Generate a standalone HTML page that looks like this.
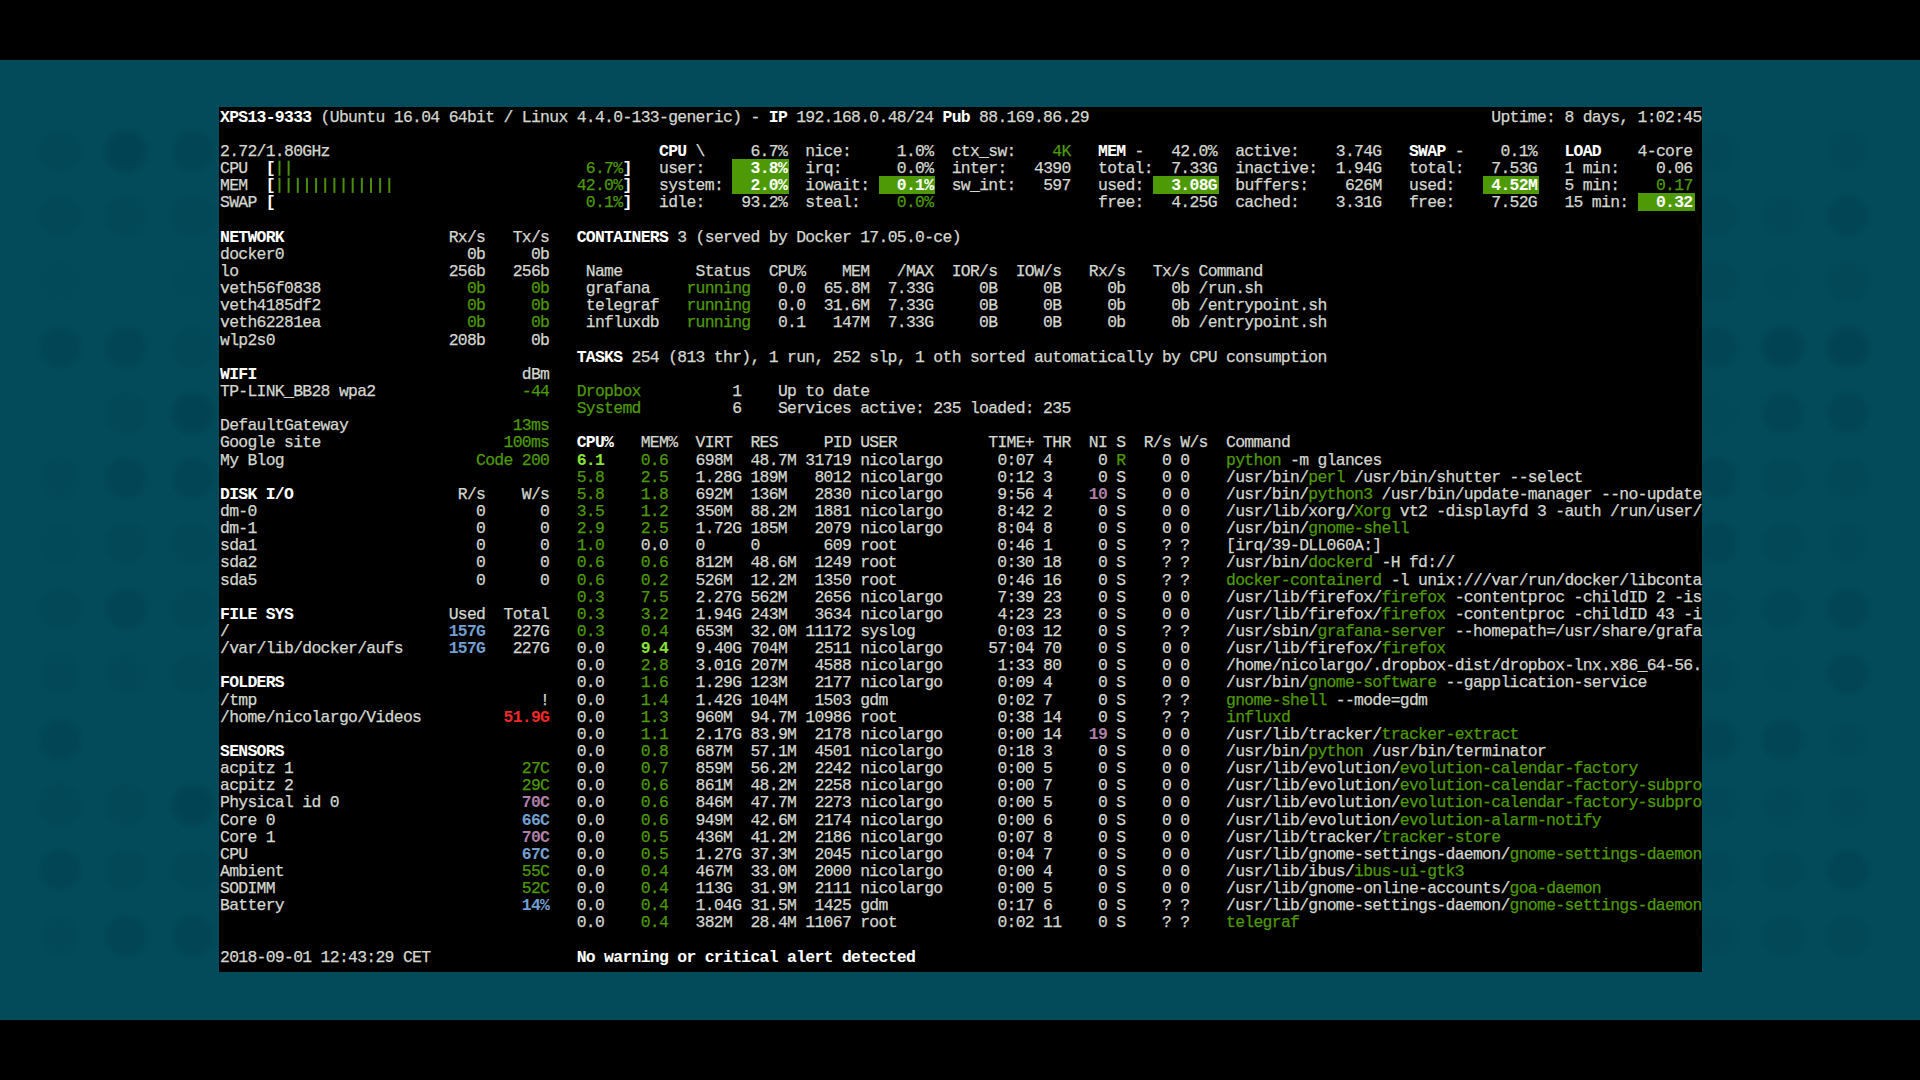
<!DOCTYPE html>
<html><head><meta charset="utf-8"><title>glances</title>
<style>
html,body{margin:0;padding:0;}
body{width:1920px;height:1080px;overflow:hidden;background:#000;position:relative;}
#bg{position:absolute;left:0;top:60px;width:1920px;height:960px;background:#034a5a;overflow:hidden;}
.ic{position:absolute;width:40px;height:40px;border-radius:50%;background:rgba(0,20,30,0.11);filter:blur(2.5px);}
#term{position:absolute;left:219px;top:107px;width:1483px;height:865px;background:#000;}
.row{position:absolute;left:220.00px;height:17.1429px;line-height:17.1429px;white-space:pre;
 font-family:"Liberation Mono",monospace;font-size:16.40px;letter-spacing:-0.6906px;color:#d3d7cf;-webkit-text-stroke:0.25px currentColor;}
.hl{position:absolute;background:#4e9a06;}
.bar{position:absolute;width:2.2px;height:15px;background:#4e9a06;}
.n{color:#d3d7cf}
.b{color:#ffffff;font-weight:bold;-webkit-text-stroke-width:0.05px}
.g{color:#4e9a06}
.G{color:#8ae234;font-weight:bold;-webkit-text-stroke-width:0.05px}
.B{color:#729fcf;font-weight:bold;-webkit-text-stroke-width:0.05px}
.M{color:#ad7fa8;font-weight:bold;-webkit-text-stroke-width:0.05px}
.R{color:#ef2929;font-weight:bold;-webkit-text-stroke-width:0.05px}
.h{color:#ffffff;font-weight:bold;-webkit-text-stroke-width:0.05px}
</style></head><body>
<div id="bg"><div class="ic" style="left:40px;top:71px;opacity:0.33"></div>
<div class="ic" style="left:106px;top:71px;opacity:1.00"></div>
<div class="ic" style="left:173px;top:71px;opacity:0.63"></div>
<div class="ic" style="left:1697px;top:71px;opacity:0.19"></div>
<div class="ic" style="left:1828px;top:71px;opacity:0.19"></div>
<div class="ic" style="left:40px;top:136px;opacity:0.33"></div>
<div class="ic" style="left:106px;top:136px;opacity:0.33"></div>
<div class="ic" style="left:173px;top:136px;opacity:0.33"></div>
<div class="ic" style="left:1697px;top:136px;opacity:0.33"></div>
<div class="ic" style="left:1763px;top:136px;opacity:0.19"></div>
<div class="ic" style="left:1828px;top:136px;opacity:0.63"></div>
<div class="ic" style="left:40px;top:202px;opacity:0.11"></div>
<div class="ic" style="left:173px;top:202px;opacity:0.11"></div>
<div class="ic" style="left:1697px;top:202px;opacity:0.33"></div>
<div class="ic" style="left:1763px;top:202px;opacity:0.05"></div>
<div class="ic" style="left:1828px;top:202px;opacity:0.33"></div>
<div class="ic" style="left:40px;top:267px;opacity:0.63"></div>
<div class="ic" style="left:106px;top:267px;opacity:0.63"></div>
<div class="ic" style="left:173px;top:267px;opacity:0.33"></div>
<div class="ic" style="left:1697px;top:267px;opacity:0.63"></div>
<div class="ic" style="left:1763px;top:267px;opacity:1.00"></div>
<div class="ic" style="left:1828px;top:267px;opacity:1.00"></div>
<div class="ic" style="left:106px;top:333px;opacity:0.33"></div>
<div class="ic" style="left:173px;top:333px;opacity:1.00"></div>
<div class="ic" style="left:1697px;top:333px;opacity:0.11"></div>
<div class="ic" style="left:1763px;top:333px;opacity:0.63"></div>
<div class="ic" style="left:1828px;top:333px;opacity:0.63"></div>
<div class="ic" style="left:40px;top:398px;opacity:0.19"></div>
<div class="ic" style="left:106px;top:398px;opacity:0.63"></div>
<div class="ic" style="left:173px;top:398px;opacity:0.63"></div>
<div class="ic" style="left:1697px;top:398px;opacity:0.63"></div>
<div class="ic" style="left:1763px;top:398px;opacity:0.33"></div>
<div class="ic" style="left:1828px;top:398px;opacity:0.33"></div>
<div class="ic" style="left:40px;top:463px;opacity:0.11"></div>
<div class="ic" style="left:106px;top:463px;opacity:0.33"></div>
<div class="ic" style="left:173px;top:463px;opacity:0.33"></div>
<div class="ic" style="left:1697px;top:463px;opacity:0.63"></div>
<div class="ic" style="left:1763px;top:463px;opacity:0.33"></div>
<div class="ic" style="left:1828px;top:463px;opacity:0.19"></div>
<div class="ic" style="left:40px;top:529px;opacity:0.33"></div>
<div class="ic" style="left:106px;top:529px;opacity:0.63"></div>
<div class="ic" style="left:173px;top:529px;opacity:0.33"></div>
<div class="ic" style="left:1697px;top:529px;opacity:0.23"></div>
<div class="ic" style="left:1763px;top:529px;opacity:0.44"></div>
<div class="ic" style="left:1828px;top:529px;opacity:0.63"></div>
<div class="ic" style="left:40px;top:594px;opacity:0.19"></div>
<div class="ic" style="left:106px;top:594px;opacity:0.19"></div>
<div class="ic" style="left:173px;top:594px;opacity:0.33"></div>
<div class="ic" style="left:1697px;top:594px;opacity:0.19"></div>
<div class="ic" style="left:1763px;top:594px;opacity:0.05"></div>
<div class="ic" style="left:1828px;top:594px;opacity:0.63"></div>
<div class="ic" style="left:40px;top:660px;opacity:0.63"></div>
<div class="ic" style="left:1697px;top:660px;opacity:0.63"></div>
<div class="ic" style="left:1763px;top:660px;opacity:0.63"></div>
<div class="ic" style="left:1828px;top:660px;opacity:0.19"></div>
<div class="ic" style="left:40px;top:725px;opacity:0.33"></div>
<div class="ic" style="left:106px;top:725px;opacity:0.33"></div>
<div class="ic" style="left:173px;top:725px;opacity:1.00"></div>
<div class="ic" style="left:1697px;top:725px;opacity:0.19"></div>
<div class="ic" style="left:1763px;top:725px;opacity:0.19"></div>
<div class="ic" style="left:1828px;top:725px;opacity:0.19"></div>
<div class="ic" style="left:40px;top:790px;opacity:0.63"></div>
<div class="ic" style="left:106px;top:790px;opacity:0.33"></div>
<div class="ic" style="left:173px;top:790px;opacity:0.33"></div>
<div class="ic" style="left:1697px;top:790px;opacity:0.19"></div>
<div class="ic" style="left:1763px;top:790px;opacity:0.33"></div>
<div class="ic" style="left:1828px;top:790px;opacity:0.63"></div>
<div class="ic" style="left:40px;top:856px;opacity:0.19"></div>
<div class="ic" style="left:106px;top:856px;opacity:0.63"></div>
<div class="ic" style="left:173px;top:856px;opacity:0.63"></div>
<div class="ic" style="left:1697px;top:856px;opacity:0.19"></div>
<div class="ic" style="left:1763px;top:856px;opacity:0.33"></div>
<div class="ic" style="left:1828px;top:856px;opacity:0.33"></div></div>
<div id="term"></div>
<div class="hl" style="left:732.46px;top:159.13px;width:56.41px;height:17.44px"></div>
<div class="hl" style="left:732.46px;top:176.27px;width:56.41px;height:17.44px"></div>
<div class="hl" style="left:878.87px;top:176.27px;width:56.41px;height:17.44px"></div>
<div class="hl" style="left:1153.40px;top:176.27px;width:65.56px;height:17.44px"></div>
<div class="hl" style="left:1482.84px;top:176.27px;width:56.41px;height:17.44px"></div>
<div class="hl" style="left:1638.40px;top:193.41px;width:56.41px;height:17.44px"></div>
<svg style="position:absolute;left:0;top:0" width="1920" height="1080"><rect x="278.48" y="160.73" width="2" height="15" fill="#4a8f0a"/><rect x="287.63" y="160.73" width="2" height="15" fill="#4a8f0a"/><rect x="278.48" y="177.87" width="2" height="15" fill="#4a8f0a"/><rect x="287.63" y="177.87" width="2" height="15" fill="#4a8f0a"/><rect x="296.78" y="177.87" width="2" height="15" fill="#4a8f0a"/><rect x="305.93" y="177.87" width="2" height="15" fill="#4a8f0a"/><rect x="315.09" y="177.87" width="2" height="15" fill="#4a8f0a"/><rect x="324.24" y="177.87" width="2" height="15" fill="#4a8f0a"/><rect x="333.39" y="177.87" width="2" height="15" fill="#4a8f0a"/><rect x="342.54" y="177.87" width="2" height="15" fill="#4a8f0a"/><rect x="351.69" y="177.87" width="2" height="15" fill="#4a8f0a"/><rect x="360.84" y="177.87" width="2" height="15" fill="#4a8f0a"/><rect x="369.99" y="177.87" width="2" height="15" fill="#4a8f0a"/><rect x="379.14" y="177.87" width="2" height="15" fill="#4a8f0a"/><rect x="388.29" y="177.87" width="2" height="15" fill="#4a8f0a"/></svg>
<div class="row" style="top:108.70px"><span class="b">XPS13-9333 </span><span class="n">(Ubuntu 16.04 64bit / Linux 4.4.0-133-generic) - </span><span class="b">IP </span><span class="n">192.168.0.48/24 </span><span class="b">Pub </span><span class="n">88.169.86.29                                            Uptime: 8 days, 1:02:45</span></div>
<div class="row" style="top:125.84px"><span class="n">                                                                                                                                                                  </span></div>
<div class="row" style="top:142.99px"><span class="n">2.72/1.80GHz                                    </span><span class="b">CPU </span><span class="n">\     6.7%  nice:     1.0%  ctx_sw:    </span><span class="g">4K   </span><span class="b">MEM </span><span class="n">-   42.0%  active:    3.74G   </span><span class="b">SWAP </span><span class="n">-    0.1%   </span><span class="b">LOAD    </span><span class="n">4-core </span></div>
<div class="row" style="top:160.13px"><span class="n">CPU  </span><span class="b">[                                  </span><span class="g">6.7%</span><span class="b">]   </span><span class="n">user:     </span><span class="h">3.8%  </span><span class="n">irq:      0.0%  inter:   4390   total:  7.33G  inactive:  1.94G   total:   7.53G   1 min:    0.06 </span></div>
<div class="row" style="top:177.27px"><span class="n">MEM  </span><span class="b">[                                 </span><span class="g">42.0%</span><span class="b">]   </span><span class="n">system:   </span><span class="h">2.0%  </span><span class="n">iowait:   </span><span class="h">0.1%  </span><span class="n">sw_int:   597   used:   </span><span class="h">3.08G  </span><span class="n">buffers:    626M   used:    </span><span class="h">4.52M   </span><span class="n">5 min:    </span><span class="g">0.17 </span></div>
<div class="row" style="top:194.41px"><span class="n">SWAP </span><span class="b">[                                  </span><span class="g">0.1%</span><span class="b">]   </span><span class="n">idle:    93.2%  steal:    </span><span class="g">0.0%                  </span><span class="n">free:   4.25G  cached:    3.31G   free:    7.52G   15 min:   </span><span class="h">0.32 </span></div>
<div class="row" style="top:211.56px"><span class="n">                                                                                                                                                                  </span></div>
<div class="row" style="top:228.70px"><span class="b">NETWORK                  </span><span class="n">Rx/s   Tx/s   </span><span class="b">CONTAINERS </span><span class="n">3 (served by Docker 17.05.0-ce)                                                                                 </span></div>
<div class="row" style="top:245.84px"><span class="n">docker0                    0b     0b                                                                                                                              </span></div>
<div class="row" style="top:262.99px"><span class="n">lo                       256b   256b    Name        Status  CPU%    MEM   /MAX  IOR/s  IOW/s   Rx/s   Tx/s Command                                                </span></div>
<div class="row" style="top:280.13px"><span class="n">veth56f0838                </span><span class="g">0b     0b    </span><span class="n">grafana    </span><span class="g">running   </span><span class="n">0.0  65.8M  7.33G     0B     0B     0b     0b /run.sh                                                </span></div>
<div class="row" style="top:297.27px"><span class="n">veth4185df2                </span><span class="g">0b     0b    </span><span class="n">telegraf   </span><span class="g">running   </span><span class="n">0.0  31.6M  7.33G     0B     0B     0b     0b /entrypoint.sh                                         </span></div>
<div class="row" style="top:314.41px"><span class="n">veth62281ea                </span><span class="g">0b     0b    </span><span class="n">influxdb   </span><span class="g">running   </span><span class="n">0.1   147M  7.33G     0B     0B     0b     0b /entrypoint.sh                                         </span></div>
<div class="row" style="top:331.56px"><span class="n">wlp2s0                   208b     0b                                                                                                                              </span></div>
<div class="row" style="top:348.70px"><span class="n">                                       </span><span class="b">TASKS </span><span class="n">254 (813 thr), 1 run, 252 slp, 1 oth sorted automatically by CPU consumption                                         </span></div>
<div class="row" style="top:365.84px"><span class="b">WIFI                             </span><span class="n">dBm                                                                                                                              </span></div>
<div class="row" style="top:382.99px"><span class="n">TP-LINK_BB28 wpa2                </span><span class="g">-44   Dropbox          </span><span class="n">1    Up to date                                                                                           </span></div>
<div class="row" style="top:400.13px"><span class="n">                                       </span><span class="g">Systemd          </span><span class="n">6    Services active: 235 loaded: 235                                                                     </span></div>
<div class="row" style="top:417.27px"><span class="n">DefaultGateway                  </span><span class="g">13ms                                                                                                                              </span></div>
<div class="row" style="top:434.41px"><span class="n">Google site                    </span><span class="g">100ms   </span><span class="b">CPU%   </span><span class="n">MEM%  VIRT  RES     PID USER          TIME+ THR  NI S  R/s W/s  Command                                             </span></div>
<div class="row" style="top:451.56px"><span class="n">My Blog                     </span><span class="g">Code 200   </span><span class="G">6.1    </span><span class="g">0.6   </span><span class="n">698M  48.7M 31719 nicolargo      0:07 4     0 </span><span class="g">R    </span><span class="n">0 0    </span><span class="g">python </span><span class="n">-m glances                                   </span></div>
<div class="row" style="top:468.70px"><span class="n">                                       </span><span class="g">5.8    2.5   </span><span class="n">1.28G 189M   8012 nicolargo      0:12 3     0 S    0 0    /usr/bin/</span><span class="g">perl </span><span class="n">/usr/bin/shutter --select             </span></div>
<div class="row" style="top:485.84px"><span class="b">DISK I/O                  </span><span class="n">R/s    W/s   </span><span class="g">5.8    1.8   </span><span class="n">692M  136M   2830 nicolargo      9:56 4    </span><span class="M">10 </span><span class="n">S    0 0    /usr/bin/</span><span class="g">python3 </span><span class="n">/usr/bin/update-manager --no-update</span></div>
<div class="row" style="top:502.99px"><span class="n">dm-0                        0      0   </span><span class="g">3.5    1.2   </span><span class="n">350M  88.2M  1881 nicolargo      8:42 2     0 S    0 0    /usr/lib/xorg/</span><span class="g">Xorg </span><span class="n">vt2 -displayfd 3 -auth /run/user/</span></div>
<div class="row" style="top:520.13px"><span class="n">dm-1                        0      0   </span><span class="g">2.9    2.5   </span><span class="n">1.72G 185M   2079 nicolargo      8:04 8     0 S    0 0    /usr/bin/</span><span class="g">gnome-shell                                </span></div>
<div class="row" style="top:537.27px"><span class="n">sda1                        0      0   </span><span class="g">1.0    </span><span class="n">0.0   0     0       609 root           0:46 1     0 S    ? ?    [irq/39-DLL060A:]                                   </span></div>
<div class="row" style="top:554.41px"><span class="n">sda2                        0      0   </span><span class="g">0.6    0.6   </span><span class="n">812M  48.6M  1249 root           0:30 18    0 S    ? ?    /usr/bin/</span><span class="g">dockerd </span><span class="n">-H fd://                           </span></div>
<div class="row" style="top:571.56px"><span class="n">sda5                        0      0   </span><span class="g">0.6    0.2   </span><span class="n">526M  12.2M  1350 root           0:46 16    0 S    ? ?    </span><span class="g">docker-containerd </span><span class="n">-l unix:///var/run/docker/libconta</span></div>
<div class="row" style="top:588.70px"><span class="n">                                       </span><span class="g">0.3    7.5   </span><span class="n">2.27G 562M   2656 nicolargo      7:39 23    0 S    0 0    /usr/lib/firefox/</span><span class="g">firefox </span><span class="n">-contentproc -childID 2 -is</span></div>
<div class="row" style="top:605.84px"><span class="b">FILE SYS                 </span><span class="n">Used  Total   </span><span class="g">0.3    3.2   </span><span class="n">1.94G 243M   3634 nicolargo      4:23 23    0 S    0 0    /usr/lib/firefox/</span><span class="g">firefox </span><span class="n">-contentproc -childID 43 -i</span></div>
<div class="row" style="top:622.99px"><span class="n">/                        </span><span class="B">157G   </span><span class="n">227G   </span><span class="g">0.3    0.4   </span><span class="n">653M  32.0M 11172 syslog         0:03 12    0 S    ? ?    /usr/sbin/</span><span class="g">grafana-server </span><span class="n">--homepath=/usr/share/grafa</span></div>
<div class="row" style="top:640.13px"><span class="n">/var/lib/docker/aufs     </span><span class="B">157G   </span><span class="n">227G   0.0    </span><span class="G">9.4   </span><span class="n">9.40G 704M   2511 nicolargo     57:04 70    0 S    0 0    /usr/lib/firefox/</span><span class="g">firefox                            </span></div>
<div class="row" style="top:657.27px"><span class="n">                                       </span><span class="n">0.0    </span><span class="g">2.8   </span><span class="n">3.01G 207M   4588 nicolargo      1:33 80    0 S    0 0    /home/nicolargo/.dropbox-dist/dropbox-lnx.x86_64-56.</span></div>
<div class="row" style="top:674.41px"><span class="b">FOLDERS                                </span><span class="n">0.0    </span><span class="g">1.6   </span><span class="n">1.29G 123M   2177 nicolargo      0:09 4     0 S    0 0    /usr/bin/</span><span class="g">gnome-software </span><span class="n">--gapplication-service      </span></div>
<div class="row" style="top:691.56px"><span class="n">/tmp                               !   0.0    </span><span class="g">1.4   </span><span class="n">1.42G 104M   1503 gdm            0:02 7     0 S    ? ?    </span><span class="g">gnome-shell </span><span class="n">--mode=gdm                              </span></div>
<div class="row" style="top:708.70px"><span class="n">/home/nicolargo/Videos         </span><span class="R">51.9G   </span><span class="n">0.0    </span><span class="g">1.3   </span><span class="n">960M  94.7M 10986 root           0:38 14    0 S    ? ?    </span><span class="g">influxd                                             </span></div>
<div class="row" style="top:725.84px"><span class="n">                                       </span><span class="n">0.0    </span><span class="g">1.1   </span><span class="n">2.17G 83.9M  2178 nicolargo      0:00 14   </span><span class="M">19 </span><span class="n">S    0 0    /usr/lib/tracker/</span><span class="g">tracker-extract                    </span></div>
<div class="row" style="top:742.99px"><span class="b">SENSORS                                </span><span class="n">0.0    </span><span class="g">0.8   </span><span class="n">687M  57.1M  4501 nicolargo      0:18 3     0 S    0 0    /usr/bin/</span><span class="g">python </span><span class="n">/usr/bin/terminator                 </span></div>
<div class="row" style="top:760.13px"><span class="n">acpitz 1                         </span><span class="g">27C   </span><span class="n">0.0    </span><span class="g">0.7   </span><span class="n">859M  56.2M  2242 nicolargo      0:00 5     0 S    0 0    /usr/lib/evolution/</span><span class="g">evolution-calendar-factory       </span></div>
<div class="row" style="top:777.27px"><span class="n">acpitz 2                         </span><span class="g">29C   </span><span class="n">0.0    </span><span class="g">0.6   </span><span class="n">861M  48.2M  2258 nicolargo      0:00 7     0 S    0 0    /usr/lib/evolution/</span><span class="g">evolution-calendar-factory-subpro</span></div>
<div class="row" style="top:794.41px"><span class="n">Physical id 0                    </span><span class="M">70C   </span><span class="n">0.0    </span><span class="g">0.6   </span><span class="n">846M  47.7M  2273 nicolargo      0:00 5     0 S    0 0    /usr/lib/evolution/</span><span class="g">evolution-calendar-factory-subpro</span></div>
<div class="row" style="top:811.56px"><span class="n">Core 0                           </span><span class="B">66C   </span><span class="n">0.0    </span><span class="g">0.6   </span><span class="n">949M  42.6M  2174 nicolargo      0:00 6     0 S    0 0    /usr/lib/evolution/</span><span class="g">evolution-alarm-notify           </span></div>
<div class="row" style="top:828.70px"><span class="n">Core 1                           </span><span class="M">70C   </span><span class="n">0.0    </span><span class="g">0.5   </span><span class="n">436M  41.2M  2186 nicolargo      0:07 8     0 S    0 0    /usr/lib/tracker/</span><span class="g">tracker-store                      </span></div>
<div class="row" style="top:845.84px"><span class="n">CPU                              </span><span class="B">67C   </span><span class="n">0.0    </span><span class="g">0.5   </span><span class="n">1.27G 37.3M  2045 nicolargo      0:04 7     0 S    0 0    /usr/lib/gnome-settings-daemon/</span><span class="g">gnome-settings-daemon</span></div>
<div class="row" style="top:862.99px"><span class="n">Ambient                          </span><span class="g">55C   </span><span class="n">0.0    </span><span class="g">0.4   </span><span class="n">467M  33.0M  2000 nicolargo      0:00 4     0 S    0 0    /usr/lib/ibus/</span><span class="g">ibus-ui-gtk3                          </span></div>
<div class="row" style="top:880.13px"><span class="n">SODIMM                           </span><span class="g">52C   </span><span class="n">0.0    </span><span class="g">0.4   </span><span class="n">113G  31.9M  2111 nicolargo      0:00 5     0 S    0 0    /usr/lib/gnome-online-accounts/</span><span class="g">goa-daemon           </span></div>
<div class="row" style="top:897.27px"><span class="n">Battery                          </span><span class="B">14%   </span><span class="n">0.0    </span><span class="g">0.4   </span><span class="n">1.04G 31.5M  1425 gdm            0:17 6     0 S    ? ?    /usr/lib/gnome-settings-daemon/</span><span class="g">gnome-settings-daemon</span></div>
<div class="row" style="top:914.41px"><span class="n">                                       </span><span class="n">0.0    </span><span class="g">0.4   </span><span class="n">382M  28.4M 11067 root           0:02 11    0 S    ? ?    </span><span class="g">telegraf                                            </span></div>
<div class="row" style="top:931.56px"><span class="n">                                                                                                                                                                  </span></div>
<div class="row" style="top:948.70px"><span class="n">2018-09-01 12:43:29 CET                </span><span class="b">No warning or critical alert detected                                                                                      </span></div>
</body></html>
